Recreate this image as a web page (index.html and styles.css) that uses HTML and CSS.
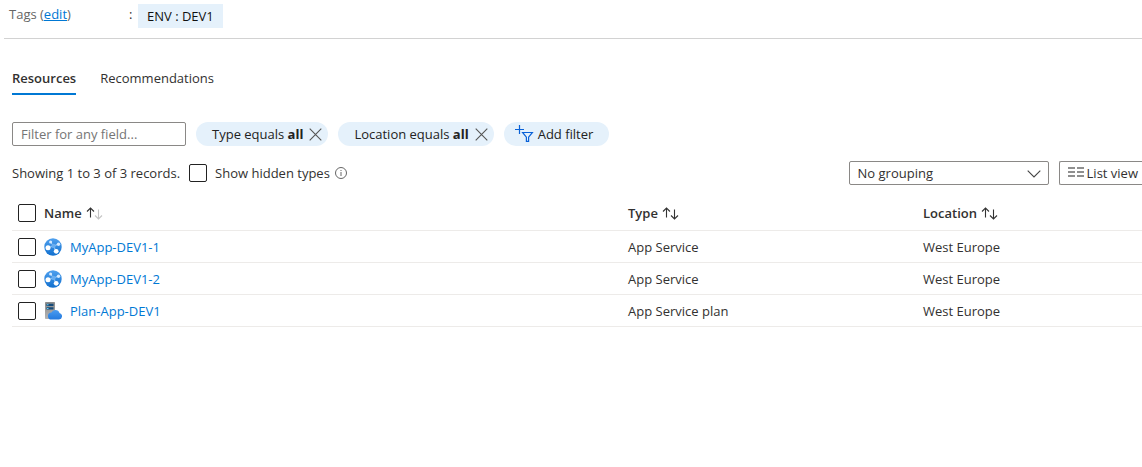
FILE: index.html
```html
<!DOCTYPE html>
<html lang="en">
<head>
<meta charset="utf-8">
<title>Resources</title>
<link rel="stylesheet" href="styles.css">
</head>
<body>
<svg class="sprite" aria-hidden="true">
  <defs>
    <linearGradient id="globe" x1="0" y1="0" x2="0" y2="1"><stop offset="0" stop-color="#4fa0ee"/><stop offset="1" stop-color="#1170cf"/></linearGradient>
    <linearGradient id="cloud" x1="0" y1="0" x2="0" y2="1"><stop offset="0" stop-color="#4a9cf0"/><stop offset="1" stop-color="#2379de"/></linearGradient>
    <linearGradient id="server" x1="0" y1="0" x2="0" y2="1"><stop offset="0" stop-color="#8b8b8b"/><stop offset="1" stop-color="#b4b4b4"/></linearGradient>
    <symbol id="icon-app" viewBox="0 0 18 18">
      <circle cx="9" cy="9" r="8.7" fill="url(#globe)"/>
      <path d="M9.5 8 6.6 4M9.5 8l5-1.8M9.5 8 4 9.7M9.5 8l2.7 5.3" stroke="#a5d0f8" stroke-width="1" fill="none"/>
      <circle cx="9.5" cy="7.9" r="2.2" fill="#68adf0"/>
      <circle cx="6.6" cy="4.1" r="1.5" fill="#d6eaff"/>
      <circle cx="14.5" cy="6.2" r="1.7" fill="#d6eaff"/>
      <circle cx="4" cy="9.7" r="2.5" fill="#fff"/>
      <circle cx="12.2" cy="13.3" r="2.4" fill="#fff"/>
    </symbol>
    <symbol id="icon-plan" viewBox="0 0 18 18">
      <rect x="1" y="0" width="10" height="17" rx="0.7" fill="url(#server)"/>
      <path d="M2.5 1.7h7v2.2h-7zM2.5 5.3h7v2.2h-7z" fill="#174b79"/>
      <path d="M3 2.3h1.5v1H3zM3 5.9h1.5v1H3z" fill="#65d6ff"/>
      <path d="M7.6 17.6a3.5 3.5 0 0 1-.2-7 4.3 4.3 0 0 1 8.1.5 3.3 3.3 0 0 1-.5 6.5z" fill="url(#cloud)"/>
    </symbol>
    <symbol id="icon-close" viewBox="0 0 13 13"><path d="M.7.7l11.6 11.6M12.3.7.7 12.3" fill="none" stroke="#555" stroke-width="1.1"/></symbol>
    <symbol id="icon-sort" viewBox="0 0 17 13">
      <path d="M4.5 10.5V1M1 4.5 4.5 1 8 4.5" fill="none" stroke="#333" stroke-width="1.1"/>
      <path d="M12.5 2.5V12M9 8.5l3.5 3.5L16 8.5" fill="none" stroke="currentColor" stroke-width="1.1"/>
    </symbol>
  </defs>
</svg>

<section class="tags">
  <span class="tags-label">Tags (<a href="#">edit</a>)</span>
  <span class="tags-colon">:</span>
  <span class="tag">ENV : DEV1</span>
</section>

<main class="content">
  <nav class="tabs" role="tablist">
    <button class="tab tab-active" role="tab" aria-selected="true">Resources</button>
    <button class="tab" role="tab" aria-selected="false">Recommendations</button>
  </nav>

  <div class="filters">
    <input class="search" type="text" placeholder="Filter for any field..." aria-label="Filter for any field">
    <div class="pill"><span>Type equals <b>all</b></span><button class="clear" aria-label="Remove type filter"><svg width="13" height="13"><use href="#icon-close"/></svg></button></div>
    <div class="pill"><span>Location equals <b>all</b></span><button class="clear" aria-label="Remove location filter"><svg width="13" height="13"><use href="#icon-close"/></svg></button></div>
    <button class="pill pill-add"><svg width="19" height="18" viewBox="0 0 19 18" fill="none" stroke="#0a62d8" stroke-width="1.2"><path d="M4.5 0v9M0 4.5h9M7.6 7.5h9.8l-3.8 4.7v4.2h-2.2v-4.2z"/></svg>Add filter</button>
  </div>

  <div class="toolbar">
    <span class="count">Showing 1 to 3 of 3 records.</span>
    <label class="hidden-types"><input class="check" type="checkbox">Show hidden types</label>
    <svg class="info" width="12" height="12" viewBox="0 0 12 12"><circle cx="6" cy="6" r="5.5" fill="none" stroke="#666"/><path d="M6 5v4M6 3v1" stroke="#666"/></svg>
    <div class="grouping">
      <select class="select" aria-label="Grouping"><option>No grouping</option></select>
      <svg class="chevron" width="14" height="8" viewBox="0 0 14 8"><path d="M.7.7 7 7 13.3.7" fill="none" stroke="#444" stroke-width="1.1"/></svg>
    </div>
    <button class="view"><svg width="16" height="12" viewBox="0 0 16 12"><path d="M0 1h7M9 1h7M0 5h7M9 5h7M0 9h7M9 9h7" stroke="#8f8f8f" stroke-width="2"/></svg>List view</button>
  </div>

  <table class="grid">
    <colgroup><col class="col-check"><col><col class="col-type"><col class="col-location"></colgroup>
    <thead>
      <tr>
        <th><input class="check" type="checkbox" aria-label="Select all"></th>
        <th scope="col"><span class="cell">Name<svg class="sort sort-asc" width="17" height="13"><use href="#icon-sort"/></svg></span></th>
        <th scope="col"><span class="cell">Type<svg class="sort" width="17" height="13"><use href="#icon-sort"/></svg></span></th>
        <th scope="col"><span class="cell">Location<svg class="sort" width="17" height="13"><use href="#icon-sort"/></svg></span></th>
      </tr>
    </thead>
    <tbody>
      <tr>
        <td><input class="check" type="checkbox" aria-label="Select MyApp-DEV1-1"></td>
        <td><span class="cell"><svg width="18" height="18"><use href="#icon-app"/></svg><a class="name" href="#">MyApp-DEV1-1</a></span></td>
        <td>App Service</td><td>West Europe</td>
      </tr>
      <tr>
        <td><input class="check" type="checkbox" aria-label="Select MyApp-DEV1-2"></td>
        <td><span class="cell"><svg width="18" height="18"><use href="#icon-app"/></svg><a class="name" href="#">MyApp-DEV1-2</a></span></td>
        <td>App Service</td><td>West Europe</td>
      </tr>
      <tr>
        <td><input class="check" type="checkbox" aria-label="Select Plan-App-DEV1"></td>
        <td><span class="cell"><svg width="18" height="18"><use href="#icon-plan"/></svg><a class="name" href="#">Plan-App-DEV1</a></span></td>
        <td>App Service plan</td><td>West Europe</td>
      </tr>
    </tbody>
  </table>
</main>
</body>
</html>
```

FILE: styles.css
```css
* { box-sizing: border-box; }
body {
  margin: 0;
  background: #fff;
  color: #323130;
  font: 13px/18px "Open Sans", "Noto Sans", sans-serif;
}
button, input, select { font: inherit; color: inherit; margin: 0; }
button { background: none; border: 0; padding: 0; }
svg { display: block; flex: none; }
.sprite { position: absolute; width: 0; height: 0; }

.tags {
  display: flex;
  margin-left: 4px;
  padding: 4px 0 10px 5px;
  border-bottom: 1px solid #d2d2d2;
}
.tags-label { width: 120px; line-height: 20px; color: #666; }
.tags-label a { color: #0078d4; }
.tags-colon { width: 9px; line-height: 20px; }
.tag { padding: 3px 9px; background: #e5f1fb; color: #111; }

.content { padding-left: 12px; }
.tabs { display: flex; gap: 24px; padding-top: 27px; }
.tab { padding: 2px 0 5px; border-bottom: 2px solid transparent; line-height: 20px; }
.tab-active { border-color: #0078d4; font-weight: 600; }

.filters { display: flex; gap: 10px; padding-top: 27px; }
.search {
  width: 174px;
  height: 24px;
  padding: 0 8px;
  border: 1px solid #8a8886;
  border-radius: 2px;
}
.search::placeholder { color: #757575; opacity: 1; }
.pill {
  display: flex;
  align-items: center;
  gap: 6px;
  height: 24px;
  padding: 0 6px 0 16px;
  border-radius: 12px;
  background: #e5f1fb;
  color: #222;
}
.pill-add { gap: 4px; padding: 0 16px 0 11px; }

.toolbar { display: flex; align-items: center; padding-top: 15px; }
.count { margin-right: 9px; }
.hidden-types { display: flex; align-items: center; gap: 8px; }
.check {
  appearance: none;
  display: block;
  width: 18px;
  height: 18px;
  border: 1px solid #222;
  border-radius: 2px;
  background: #fff;
}
.info { margin-left: 5px; }
.grouping { position: relative; width: 200px; margin: 0 10px 0 auto; }
.select {
  appearance: none;
  display: block;
  width: 100%;
  height: 24px;
  padding: 0 8px;
  border: 1px solid #8a8886;
  border-radius: 2px;
  background: #fff;
}
.chevron { position: absolute; top: 9px; right: 8px; pointer-events: none; }
.view {
  display: flex;
  align-items: center;
  gap: 3px;
  height: 24px;
  padding: 0 4px 0 8px;
  border: 1px solid #8a8886;
  border-right: 0;
  border-radius: 2px 0 0 2px;
}

.grid { width: 100%; margin-top: 12px; border-collapse: collapse; table-layout: fixed; }
.col-check { width: 32px; }
.col-type { width: 295px; }
.col-location { width: 219px; }
.grid th, .grid td { height: 32px; padding: 0; border-bottom: 1px solid #edebe9; text-align: left; }
.grid th { height: 33px; font-weight: 600; }
.grid td { padding-top: 2px; }
.grid .check { margin-left: 6px; }
.cell { display: flex; align-items: center; gap: 8px; }
.grid th .cell { gap: 4px; }
.name { color: #0078d4; text-decoration: none; }
.sort { color: #333; }
.sort-asc { color: #c4c4c4; }
```
